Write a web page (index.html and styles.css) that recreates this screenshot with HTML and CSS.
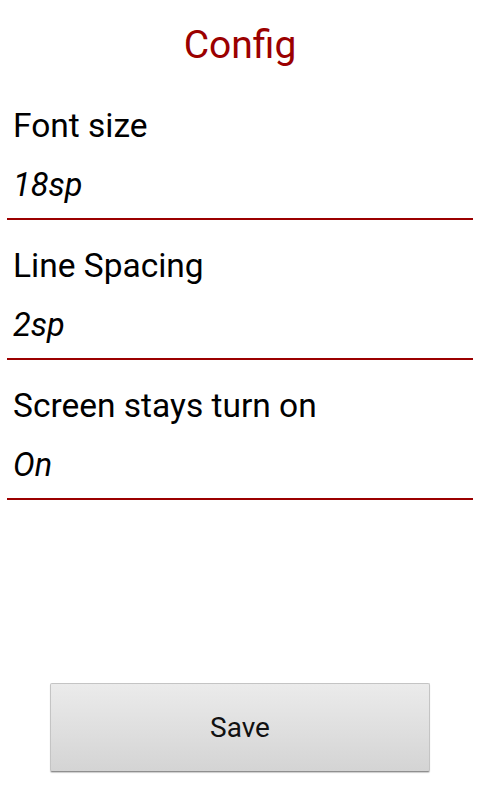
FILE: index.html
```html
<!DOCTYPE html>
<html>
<head>
<meta charset="utf-8">
<link rel="stylesheet" href="styles.css">
</head>
<body>
<div class="screen">
  <h1 class="title">Config</h1>
  <div class="field">
    <div class="label">Font size</div>
    <div class="value">18sp</div>
    <div class="divider"></div>
  </div>
  <div class="field">
    <div class="label">Line Spacing</div>
    <div class="value">2sp</div>
    <div class="divider"></div>
  </div>
  <div class="field">
    <div class="label">Screen stays turn on</div>
    <div class="value">On</div>
    <div class="divider"></div>
  </div>
  <div class="actions">
    <button class="save">Save</button>
  </div>
</div>
</body>
</html>
```
FILE: styles.css
```css
html, body {
  margin: 0;
  padding: 0;
  background: #ffffff;
}
body {
  font-family: Roboto, "Noto Sans", "Liberation Sans", sans-serif;
  color: #000000;
}
.screen {
  height: 800px;
  box-sizing: border-box;
  display: flex;
  flex-direction: column;
  padding: 22px 7px 28px 7px;
}
.title {
  margin: 0 0 38px 0;
  font-size: 39px;
  line-height: 46px;
  font-weight: 400;
  color: #9b0000;
  text-align: center;
}
.field {
  margin-bottom: 26px;
}
.label {
  font-size: 33.5px;
  line-height: 40px;
  padding-left: 6px;
}
.value {
  margin-top: 19px;
  font-size: 32.5px;
  line-height: 40px;
  font-style: italic;
  padding-left: 6px;
}
.divider {
  margin-top: 13px;
  height: 2px;
  background: #9b0000;
}
.actions {
  margin-top: auto;
  display: flex;
  justify-content: center;
}
.save {
  width: 380px;
  height: 89px;
  font-family: Roboto, "Noto Sans", "Liberation Sans", sans-serif;
  font-size: 28px;
  color: #111111;
  background: linear-gradient(#ebebeb, #d4d4d4);
  border: 1px solid #c4c4c4;
  border-bottom-color: #8f8f8f;
  border-radius: 2px;
  box-shadow: 0 1px 1px rgba(0,0,0,0.2);
  padding: 0;
}
```
